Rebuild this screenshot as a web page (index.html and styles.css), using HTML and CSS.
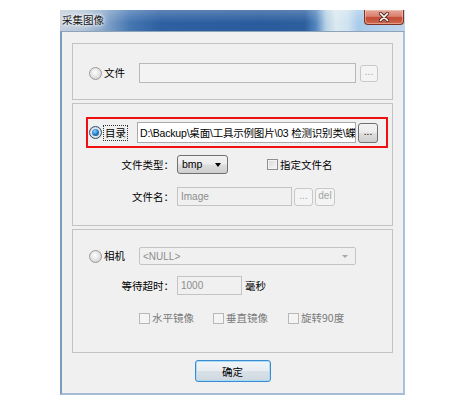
FILE: index.html
```html
<!DOCTYPE html>
<html lang="zh-CN">
<head>
<meta charset="utf-8">
<title>采集图像</title>
<link rel="stylesheet" href="styles.css">
</head>
<body>
<div class="win">
  <div class="titlebar">
    <span class="title">采集图像</span>
    <span class="close">
      <svg width="14" height="12" viewBox="0 0 14 12">
        <path d="M3.5 2.5 L10.5 9.5 M10.5 2.5 L3.5 9.5" stroke="#5a2a22" stroke-width="3.4" stroke-linecap="round"/>
        <path d="M3.5 2.5 L10.5 9.5 M10.5 2.5 L3.5 9.5" stroke="#ffffff" stroke-width="1.7" stroke-linecap="round"/>
      </svg>
    </span>
  </div>
  <div class="client">
    <div class="group g1">
      <div class="row r-file">
        <span class="choice"><span class="radio"></span><span class="lbl">文件</span></span>
        <span class="field f-file"></span>
        <span class="btn dis b-file">...</span>
      </div>
    </div>

    <div class="group g2">
      <div class="row hl">
        <span class="choice c-dir"><span class="radio on"></span><span class="lbl focus">目录</span></span>
        <span class="field f-dir"><span class="path">D:\Backup\桌面\工具示例图片\03 检测识别类\蝶</span></span>
        <span class="btn b-dir">...</span>
      </div>
      <div class="row r-type">
        <span class="key">文件类型：</span>
        <span class="select">bmp<span class="arrow"></span></span>
        <span class="check c-name"><span class="box"></span><span class="lbl">指定文件名</span></span>
      </div>
      <div class="row r-name">
        <span class="key">文件名：</span>
        <span class="field dis f-name"><span class="ph">Image</span></span>
        <span class="btn dis b-name">...</span>
        <span class="btn dis b-del">del</span>
      </div>
    </div>

    <div class="group g3">
      <div class="row r-cam">
        <span class="choice"><span class="radio"></span><span class="lbl">相机</span></span>
        <span class="field dis f-cam"><span class="ph">&lt;NULL&gt;</span><span class="arrow light"></span></span>
      </div>
      <div class="row r-wait">
        <span class="key">等待超时：</span>
        <span class="field dis f-wait"><span class="ph">1000</span></span>
        <span class="unit">毫秒</span>
      </div>
      <div class="row r-checks">
        <span class="check dis c-h"><span class="box"></span><span class="lbl">水平镜像</span></span>
        <span class="check dis c-v"><span class="box"></span><span class="lbl">垂直镜像</span></span>
        <span class="check dis c-r"><span class="box"></span><span class="lbl">旋转90度</span></span>
      </div>
    </div>

    <div class="foot">
      <span class="ok">确定</span>
    </div>
  </div>
</div>
</body>
</html>
```
FILE: styles.css
```css
* { box-sizing: border-box; }
body {
  margin: 0;
  background: #ffffff;
  font-family: "Noto Sans CJK SC", "Noto Sans", sans-serif;
  font-size: 10.5px;
  color: #000;
}
.win {
  margin: 10px 0 0 60px;
  width: 345px;
  height: 385px;
  display: flex;
  flex-direction: column;
}
.titlebar {
  height: 21px;
  display: flex;
  justify-content: space-between;
  align-items: flex-start;
  padding-left: 2px;
  background:
    linear-gradient(to bottom, rgba(255,255,255,0.22), rgba(255,255,255,0) 60%),
    linear-gradient(to right, #c3cfdb 0px, #b0c2d6 22px, #7d9fc6 48px, #4677b2 70px, #2f61a2 100px, #2a5c9d 200px, #2d5f9f 245px, #5587bf 256px, #b8d2e6 266px, #dce9ef 276px, #cfe2f0 288px, #aacbeb 298px, #bfd6ec 345px);
}
.title {
  line-height: 20px;
  color: #141414;
  text-shadow: 0 0 5px #fff, 0 0 3px #fff, 0 0 8px #eaf0f6;
}
.close {
  width: 40px;
  height: 15px;
  margin-right: 1px;
  border: 1px solid #7c3528;
  border-top: none;
  border-radius: 0 0 4px 4px;
  background: linear-gradient(#e3a898 0%, #d98170 45%, #c24a33 55%, #cf6a4f 100%);
  display: flex;
  align-items: center;
  justify-content: center;
  box-shadow: inset 0 0 0 1px rgba(255,220,210,0.45);
}
.close svg { display: block; }
.client {
  flex: 1;
  background: #f0f0f0;
  border-left: 2px solid #7d9bbf;
  border-right: 2px solid #a7c0db;
  border-bottom: 2px solid #a4bcd7;
  border-top: 1px solid #8ea2b9;
  padding: 11px 10px 0 10px;
  display: flex;
  flex-direction: column;
}
.group {
  border: 1px solid #c3c3c3;
}
.g1 { height: 57px; }
.g2 { height: 123px; margin-top: 3px; }
.g3 { height: 124px; margin-top: 3px; }

.row { display: flex; align-items: center; }
.choice { display: flex; align-items: center; width: 50px; height: 20px; }
.lbl { white-space: nowrap; line-height: 14px; }

.radio {
  position: relative;
  width: 13px;
  height: 13px;
  margin-right: 2px;
  border-radius: 50%;
  border: 1px solid #9a9a9a;
  background: radial-gradient(circle at 45% 40%, #ffffff 0%, #e6e6e6 45%, #c9c9c9 100%);
  flex: none;
}
.radio.on { border-color: #2c4e72; background: radial-gradient(circle, #e9e9e9 50%, #c0c0c0 100%); }
.radio.on::after {
  content: "";
  position: absolute;
  left: 2px;
  top: 2px;
  width: 7px;
  height: 7px;
  border-radius: 50%;
  background: radial-gradient(circle at 40% 35%, #8fd3ff 0%, #2a86cf 45%, #0d3f76 100%);
}

.field {
  display: flex;
  align-items: center;
  border: 1px solid #b9b9b9;
  background: #f3f3f3;
  overflow: hidden;
  white-space: nowrap;
  position: relative;
}
.field.dis { border-color: #c4c4c4; background: #f0f0f0; }
.ph { color: #8c8c8c; padding-left: 3px; font-family: "Liberation Sans", "Noto Sans CJK SC", sans-serif; font-size: 10px; }

.btn {
  display: flex;
  align-items: center;
  justify-content: center;
  border: 1px solid #707070;
  border-radius: 3px;
  background: linear-gradient(#f3f3f3 0%, #ebebeb 48%, #dddddd 52%, #cfcfcf 100%);
  font-family: "Liberation Sans", sans-serif;
  font-size: 10px;
  color: #000;
  line-height: 1;
  padding-bottom: 2px;
}
.btn.dis {
  border-color: #c8c8c8;
  background: #f4f4f4;
  color: #a3a3a3;
}

/* group 1 */
.r-file { margin-top: 19px; padding-left: 16px; }
.f-file { width: 217px; height: 20px; }
.b-file { width: 18px; height: 17px; margin-left: 4px; }

/* group 2 */
.hl {
  margin: 13px 0 0 13px;
  width: 302px;
  height: 31px;
  border: 2px solid #f01010;
  padding-left: 1px;
}
.c-dir { width: 48px; }
.focus { outline: 1px dotted #333; outline-offset: 0px; padding: 0 1px; }
.f-dir {
  width: 219px;
  height: 21px;
  background: #ffffff;
  border-color: #a9a9a9;
}
.path {
  padding-left: 2px;
  font-family: "Liberation Sans", "Noto Sans CJK SC", sans-serif;
  font-size: 10.5px;
  letter-spacing: -0.2px;
}
.b-dir { width: 20px; height: 20px; margin-left: 2px; }

.key { width: 101px; text-align: right; margin-right: 3px; white-space: nowrap; }
.r-type { margin-top: 7px; height: 19px; }
.select {
  position: relative;
  width: 51px;
  height: 19px;
  border: 1px solid #707070;
  border-radius: 3px;
  background: linear-gradient(#f3f3f3 0%, #ebebeb 48%, #dddddd 52%, #cfcfcf 100%);
  font-family: "Liberation Sans", sans-serif;
  font-size: 10.5px;
  line-height: 17px;
  padding-left: 4px;
}
.arrow {
  position: absolute;
  right: 6px;
  top: 7px;
  width: 0;
  height: 0;
  border-left: 3.5px solid transparent;
  border-right: 3.5px solid transparent;
  border-top: 4px solid #000;
}
.arrow.light { border-top-color: #a8a8a8; border-left-width: 3px; border-right-width: 3px; border-top-width: 3px; top: 7px; right: 7px; }

.check { display: flex; align-items: center; }
.box {
  width: 11px;
  height: 11px;
  margin-right: 2px;
  border: 1px solid #8e8f8f;
  background: linear-gradient(135deg, #d6d6d6 0%, #ececec 60%, #f8f8f8 100%);
  box-shadow: inset 0 0 0 1px #f4f4f4;
  flex: none;
}
.check.dis .box { border-color: #b8b8b8; background: #f4f4f4; box-shadow: none; }
.check.dis .lbl { color: #7a7a7a; }
.c-name { margin-left: 39px; }

.r-name { margin-top: 13px; height: 19px; }
.f-name { width: 115px; height: 19px; }
.b-name { width: 19px; height: 18px; margin-left: 2px; }
.b-del { width: 20px; height: 18px; margin-left: 2px; }

/* group 3 */
.r-cam { margin-top: 17px; padding-left: 16px; height: 18px; }
.f-cam { width: 217px; height: 18px; border-radius: 2px; }
.r-wait { margin-top: 11px; height: 19px; }
.f-wait { width: 65px; height: 19px; }
.unit { margin-left: 3px; }
.r-checks { margin-top: 15px; padding-left: 66px; height: 16px; }
.c-v { margin-left: 19px; }
.c-r { margin-left: 20px; }

.foot { display: flex; justify-content: center; margin-top: 7px; }
.ok {
  width: 76px;
  height: 22px;
  display: flex;
  align-items: center;
  justify-content: center;
  border: 1px solid #3c8ad0;
  border-radius: 3px;
  background: linear-gradient(#f2f5f8 0%, #e8edf1 48%, #d9e1e8 52%, #cfd8e0 100%);
  box-shadow: inset 0 0 0 1px #a6dcf8;
}
```
